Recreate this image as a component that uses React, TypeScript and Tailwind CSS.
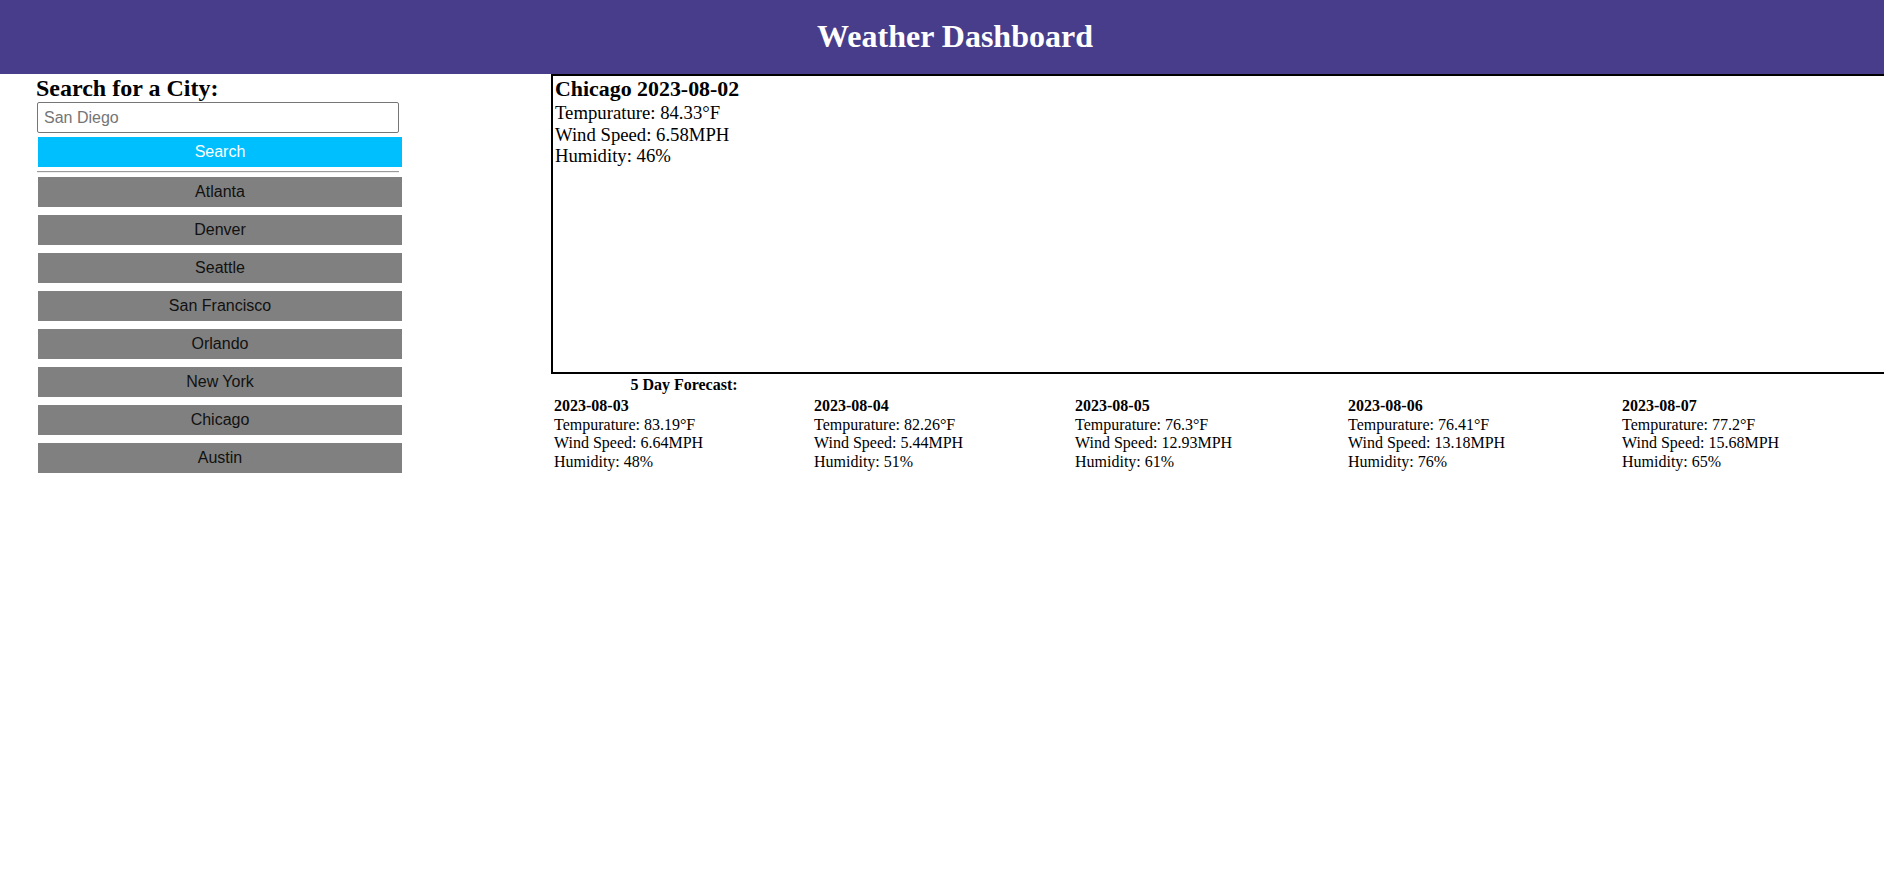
import React from "react";

const cities = [
  "Atlanta",
  "Denver",
  "Seattle",
  "San Francisco",
  "Orlando",
  "New York",
  "Chicago",
  "Austin",
];

const forecast = [
  { date: "2023-08-03", temp: "83.19", wind: "6.64", humidity: "48", width: "w-[260px]" },
  { date: "2023-08-04", temp: "82.26", wind: "5.44", humidity: "51", width: "w-[261px]" },
  { date: "2023-08-05", temp: "76.3", wind: "12.93", humidity: "61", width: "w-[273px]" },
  { date: "2023-08-06", temp: "76.41", wind: "13.18", humidity: "76", width: "w-[274px]" },
  { date: "2023-08-07", temp: "77.2", wind: "15.68", humidity: "65", width: "w-[250px]" },
];

const App = () => {
  return (
    <div className="min-h-screen bg-white text-black font-['Liberation_Serif','Times_New_Roman',serif] overflow-hidden">
      <header className="h-[74px] bg-[#483d8b] pl-[26px] pt-[18px]">
        <h1 className="text-center text-[32px] leading-[37px] font-bold text-white">
          Weather Dashboard
        </h1>
      </header>

      <div className="flex">
        {/* search column */}
        <div className="w-[551px] flex-none flex flex-col">
          <h2 className="ml-[36px] text-[24px] leading-[28px] font-bold">
            Search for a City:
          </h2>
          <input
            type="text"
            placeholder="San Diego"
            className="ml-[37px] w-[362px] h-[31px] px-[6px] border border-[#767676] rounded-[2px] text-[16px] font-['Liberation_Sans',Arial,sans-serif] placeholder:text-[#757575] outline-none"
          />
          <button className="ml-[38px] mt-[4px] w-[364px] h-[30px] bg-[#00bfff] text-white text-[16px] font-['Liberation_Sans',Arial,sans-serif]">
            Search
          </button>
          <div className="ml-[37px] w-[362px] mt-[4px] mb-[4px] h-[2px] border-t border-t-[#9a9a9a] border-b border-b-[#eeeeee]" />
          <div className="flex flex-col gap-[8px]">
            {cities.map((city) => (
              <button
                key={city}
                className="ml-[38px] w-[364px] h-[30px] bg-[#808080] text-[#111] text-[16px] font-['Liberation_Sans',Arial,sans-serif]"
              >
                {city}
              </button>
            ))}
          </div>
        </div>

        {/* weather column */}
        <div className="flex-1 flex flex-col">
          <div className="h-[300px] border-l-2 border-t-2 border-b-2 border-black pl-[2px]">
            <h3 className="text-[21.9px] leading-[25.2px] font-bold">Chicago 2023-08-02</h3>
            <p className="text-[18.72px] leading-[21.6px] pt-[1px]">Tempurature: 84.33°F</p>
            <p className="text-[18.72px] leading-[21.6px]">Wind Speed: 6.58MPH</p>
            <p className="text-[18.72px] leading-[21.6px]">Humidity: 46%</p>
          </div>

          <div className="pl-[3px] text-[16px] leading-[18.4px]">
            <h4 className="w-[260px] mt-[2px] text-center font-bold">5 Day Forecast:</h4>
            <div className="flex mt-[3px]">
              {forecast.map((day) => (
                <div key={day.date} className={day.width + " flex-none"}>
                  <h5 className="font-bold">{day.date}</h5>
                  <p>Tempurature: {day.temp}°F</p>
                  <p>Wind Speed: {day.wind}MPH</p>
                  <p>Humidity: {day.humidity}%</p>
                </div>
              ))}
            </div>
          </div>
        </div>
      </div>
    </div>
  );
};

export default App;
